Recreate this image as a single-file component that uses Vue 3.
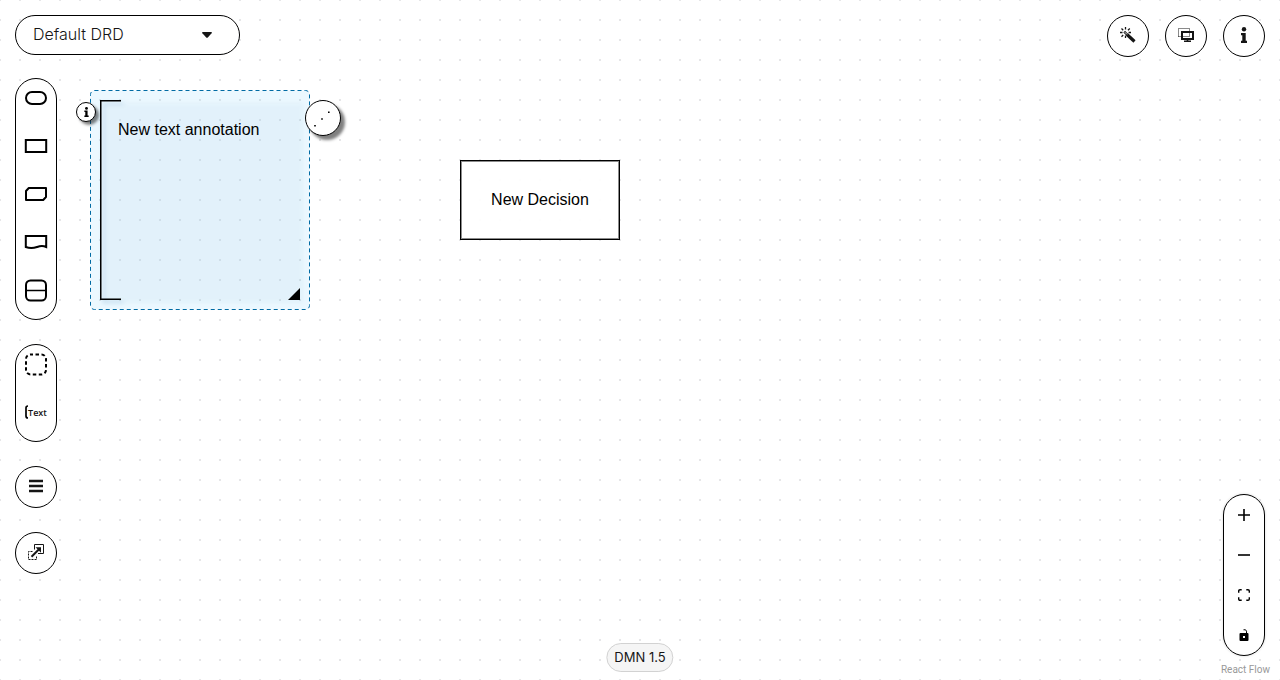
<script setup>
import { ref } from 'vue'

const drd = ref('Default DRD')
</script>

<template>
  <main class="editor">
    <section class="canvas" aria-label="Diagram">
      <svg class="selection" width="220" height="220" viewBox="0 0 220 220" aria-hidden="true">
        <rect x=".5" y=".5" width="219" height="219" rx="4" stroke-dasharray="4 3" />
      </svg>
      <div class="annotation">
        <svg class="bracket" width="200" height="200" viewBox="0 0 200 200" aria-hidden="true">
          <rect class="paper" x="0" y="0" width="200" height="200" />
          <path d="M21 .75H.75v198.500H21" fill="none" stroke="#000" stroke-width="1.500" />
        </svg>
        <span class="annotation-text">New text annotation</span>
        <svg class="resize" width="12" height="12" viewBox="0 0 12 12" aria-hidden="true"><path d="M12 0v12H0z" /></svg>
      </div>
      <button class="node-info" type="button" aria-label="Annotation properties">
        <svg width="5" height="10" viewBox="0 0 6 14" aria-hidden="true">
          <circle cx="3" cy="2" r="2" /><path d="M0 5h4.500v7H6v2H0v-2h1.300V7H0z" />
        </svg>
      </button>
      <button class="node-edge" type="button" aria-label="Add association">
        <svg width="34" height="34" viewBox="0 0 34 34" aria-hidden="true">
          <path d="M8.200 24.700h1.600M15.200 18h1.600M22 11.300h1.600" stroke="#000" stroke-width="1.500" />
        </svg>
      </button>
      <div class="decision">New Decision</div>
    </section>

    <div class="panels">
      <header class="top">
        <div class="drd">
          <select v-model="drd" aria-label="DRD">
            <option>Default DRD</option>
          </select>
          <svg width="10" height="6" viewBox="0 0 10 6" aria-hidden="true"><path d="M.8 0h8.400q1.200.2.400 1.200L5.800 5.400q-.8.700-1.600 0L.4 1.200Q-.4.200.8 0z" fill="#151515" /></svg>
        </div>
        <div class="actions">
          <button class="round" type="button" aria-label="Autolayout">
            <svg width="16" height="16" viewBox="0 0 16 16" aria-hidden="true" fill="none" stroke="#151515">
              <path d="M7 7.500l7.500 7" stroke-width="3.200" />
              <path d="M4.200 4.700l3.300 3.300" stroke-width="2.400" />
              <path d="M4.800 5.200l2.200 2.200" stroke="#fff" stroke-width=".9" />
              <path d="M5.500 0v2.500M1.500 1.500l1.700 1.700M0 5.500h2.500M1.500 9.700l1.700-1.700M5.500 8.500V11M8 3.200l1.800-1.700M8.600 5.500H11" stroke-width="1.300" />
            </svg>
          </button>
          <button class="round" type="button" aria-label="Overlays">
            <svg width="16" height="14" viewBox="0 0 16 14" aria-hidden="true" fill="none" stroke="#151515">
              <path d="M.5 8.500V.5h11V3M.5 8.500H3" stroke-dasharray="1 1" />
              <rect x="4" y="4" width="11" height="7" stroke-width="2" />
              <path d="M5.500 8.500H11M11.500 5.500v3" stroke-dasharray="1 1" />
              <path d="M9.500 11v2M6 13.200h7" stroke-width="1.600" />
            </svg>
          </button>
          <button class="round" type="button" aria-label="Properties">
            <svg width="6" height="16" viewBox="0 0 6 16" aria-hidden="true" fill="#151515">
              <circle cx="3" cy="2.200" r="2.200" /><path d="M0 6h4.700v7.700H6V16H0v-2.300h1.300V8.300H0z" />
            </svg>
          </button>
        </div>
      </header>

      <div class="middle">
        <nav class="tools" aria-label="Palette">
          <div class="pill">
            <button type="button" aria-label="Input data">
              <svg width="24" height="24" viewBox="0 0 24 24"><rect x="2" y="6" width="20" height="12" rx="6" /></svg>
            </button>
            <button type="button" aria-label="Decision">
              <svg width="24" height="24" viewBox="0 0 24 24"><rect x="1.800" y="6" width="20.400" height="12" /></svg>
            </button>
            <button type="button" aria-label="Business knowledge model">
              <svg width="24" height="24" viewBox="0 0 24 24"><path d="M4.800 6H22v9L19.200 18H2V9z" stroke-linejoin="round" /></svg>
            </button>
            <button type="button" aria-label="Knowledge source">
              <svg width="24" height="24" viewBox="0 0 24 24"><path d="M1.800 6h20.400v11c-4-2-6.500-1-9.200 0-4 1.500-7.500 1.500-11.200 0z" /></svg>
            </button>
            <button type="button" aria-label="Decision service">
              <svg width="24" height="24" viewBox="0 0 24 24"><rect x="2" y="2.500" width="20" height="20" rx="4.500" /><path d="M2 12.500h20" stroke-width="1.500" /></svg>
            </button>
          </div>
          <div class="pill">
            <button type="button" aria-label="Group">
              <svg width="24" height="24" viewBox="0 0 24 24"><rect x="2" y="2.500" width="20" height="20" rx="4.500" stroke-dasharray="3.500 2.500" stroke-dashoffset="1" /></svg>
            </button>
            <button class="text-tool" type="button" aria-label="Text annotation">
              <svg width="3" height="14" viewBox="0 0 3 14"><path d="M3 1Q1 1 1 3v8q0 2 2 2" stroke-width="1.700" /></svg>
              <span>Text</span>
            </button>
          </div>
          <button class="round" type="button" aria-label="DRG nodes">
            <svg width="14" height="14" viewBox="0 0 14 14" aria-hidden="true"><path d="M0 2h14M0 7h14M0 12h14" stroke="#151515" stroke-width="2.400" /></svg>
          </button>
          <button class="round" type="button" aria-label="External nodes">
            <svg width="16" height="16" viewBox="0 0 16 16" aria-hidden="true" fill="none" stroke="#151515">
              <path d="M6.500 5.500V.5h9v9H10" />
              <path d="M4.500 7.500h-4v8h8v-4" stroke-dasharray="2 1" />
              <path d="M3.500 12.800l7.500-7.500" stroke-width="2" />
              <path d="M7.500 3.200h5.500v5.500z" fill="#151515" stroke="none" />
            </svg>
          </button>
        </nav>

        <div class="controls">
          <button type="button" aria-label="Zoom in"><svg width="12" height="12" viewBox="0 0 12 12"><path d="M6 0v12M0 6h12" stroke="#000" stroke-width="1.600" /></svg></button>
          <button type="button" aria-label="Zoom out"><svg width="12" height="12" viewBox="0 0 12 12"><path d="M0 6h12" stroke="#000" stroke-width="1.600" /></svg></button>
          <button type="button" aria-label="Fit view"><svg width="12" height="12" viewBox="0 0 12 12"><path d="M.7 3.700V2Q.7.700 2 .7h1.700M8.300.7H10Q11.300.7 11.300 2v1.700M11.300 8.300V10q0 1.300-1.300 1.300H8.300M3.700 11.300H2Q.7 11.300.7 10V8.300" fill="none" stroke="#000" stroke-width="1.400" /></svg></button>
          <button type="button" aria-label="Toggle interactivity"><svg width="10" height="12" viewBox="0 0 10 12"><path d="M4.500.8Q7 0 7.500 2.200V4.500" fill="none" stroke="#000" /><path d="M1.500 4h7Q9.500 4 9.500 5v6q0 1-1 1h-7q-1 0-1-1V5q0-1 1-1zM4 7v2h2V7z" fill-rule="evenodd" /></svg></button>
        </div>
      </div>

      <span class="version">DMN 1.5</span>
      <a class="credit" href="#">React Flow</a>
    </div>
  </main>
</template>

<style>
body {
  background: #fff;
}
</style>

<style scoped>
.editor {
  position: relative;
  box-sizing: border-box;
  height: 100vh;
  min-height: 600px;
  overflow: hidden;
  color: #151515;
  font-family: Inter, "Liberation Sans", sans-serif;
  background-image: radial-gradient(circle at center, #e6e6e8 1px, transparent 1px);
  background-size: 20px 20px;
  background-position: -10px -10px;
}

button {
  display: flex;
  align-items: center;
  justify-content: center;
  padding: 0;
  border: 0;
  background: transparent;
  color: inherit;
  cursor: pointer;
}

svg {
  display: block;
}

.canvas {
  position: absolute;
  inset: 0;
  color: #000;
  font: 16px/24px "Liberation Sans", Arial, sans-serif;
}

.selection {
  position: absolute;
  left: 90px;
  top: 90px;
  fill: rgba(0, 160, 255, 0.08);
  stroke: #006ba4;
}

.annotation {
  position: absolute;
  left: 100px;
  top: 100px;
  width: 200px;
  height: 200px;
}

.bracket {
  position: absolute;
  inset: 0;
  overflow: visible;
  filter: drop-shadow(3px 3px 2px rgba(0, 90, 150, 0.25));
}

.paper {
  fill: rgba(225, 240, 250, 0.15);
}

.annotation-text {
  position: absolute;
  left: 18px;
  top: 18px;
  white-space: nowrap;
}

.resize {
  position: absolute;
  right: 0;
  bottom: 0;
}

.node-info,
.node-edge {
  position: absolute;
  box-sizing: border-box;
  border: 1px solid #000;
  border-radius: 50%;
  background: #fff;
}

.node-info {
  left: 76px;
  top: 102px;
  width: 20px;
  height: 20px;
  box-shadow: 3px 3px 3px rgba(0, 0, 0, 0.5);
}

.node-edge {
  left: 305px;
  top: 100px;
  width: 36px;
  height: 36px;
  box-shadow: 4px 4px 3px rgba(0, 0, 0, 0.5);
}

.decision {
  position: absolute;
  box-sizing: border-box;
  left: 460px;
  top: 160px;
  width: 160px;
  height: 80px;
  display: flex;
  align-items: center;
  justify-content: center;
  outline: 1px solid rgba(0, 0, 0, 0.45);
  outline-offset: -2px;
  border: 1px solid #000;
  background: rgba(255, 255, 255, 0.9);
}

.panels {
  position: relative;
  box-sizing: border-box;
  display: flex;
  flex-direction: column;
  height: 100%;
  padding: 15px 15px 24px;
  pointer-events: none;
}

.panels button,
.panels select,
.panels a {
  pointer-events: auto;
}

.top,
.middle {
  display: flex;
  justify-content: space-between;
}

.top {
  align-items: flex-start;
}

.middle {
  flex: 1;
  padding-top: 21px;
}

.drd {
  display: grid;
  grid-template-columns: 1fr 28px;
  align-items: center;
  width: 225px;
}

.drd select {
  grid-area: 1 / 1 / 2 / 3;
  box-sizing: border-box;
  width: 100%;
  height: 40px;
  padding: 0 40px 2px 17px;
  appearance: none;
  border: 1px solid #000;
  border-radius: 20px;
  background: #fff;
  color: #151515;
  font: 300 16px "Inter", "Liberation Sans", sans-serif;
}

.drd svg {
  grid-area: 1 / 1 / 2 / 2;
  justify-self: end;
  pointer-events: none;
}

.actions {
  display: flex;
  gap: 16px;
}

.round {
  box-sizing: border-box;
  width: 42px;
  height: 42px;
  padding-bottom: 2px;
  border: 1px solid #000;
  border-radius: 50%;
  background: #fff;
}

.tools {
  display: flex;
  flex-direction: column;
  gap: 24px;
}

.pill {
  display: flex;
  flex-direction: column;
  gap: 10px;
  box-sizing: border-box;
  width: 42px;
  padding-bottom: 10px;
  border: 1px solid #000;
  border-radius: 21px;
  background: #fff;
}

.pill button {
  height: 38px;
}

.pill svg {
  fill: none;
  stroke: #000;
  stroke-width: 2;
}

.text-tool {
  font: 600 9px "Open Sans", sans-serif;
}

.controls {
  align-self: flex-end;
  box-sizing: border-box;
  width: 42px;
  border: 1px solid #000;
  border-radius: 21px;
  background: #fff;
  box-shadow: 0 0 2px 1px rgba(0, 0, 0, 0.08);
}

.controls button {
  width: 40px;
  height: 40px;
}

.version {
  position: absolute;
  left: 50%;
  bottom: 8px;
  box-sizing: border-box;
  padding: 0 7px;
  transform: translateX(-50%);
  border: 1px solid #d2d2d2;
  border-radius: 15px;
  background: #f5f5f5;
  font-size: 13px;
  line-height: 27px;
  white-space: nowrap;
}

.credit {
  position: absolute;
  right: 10px;
  bottom: 3px;
  color: #999;
  font: 10px/14px Roboto, sans-serif;
  text-decoration: none;
}
</style>
